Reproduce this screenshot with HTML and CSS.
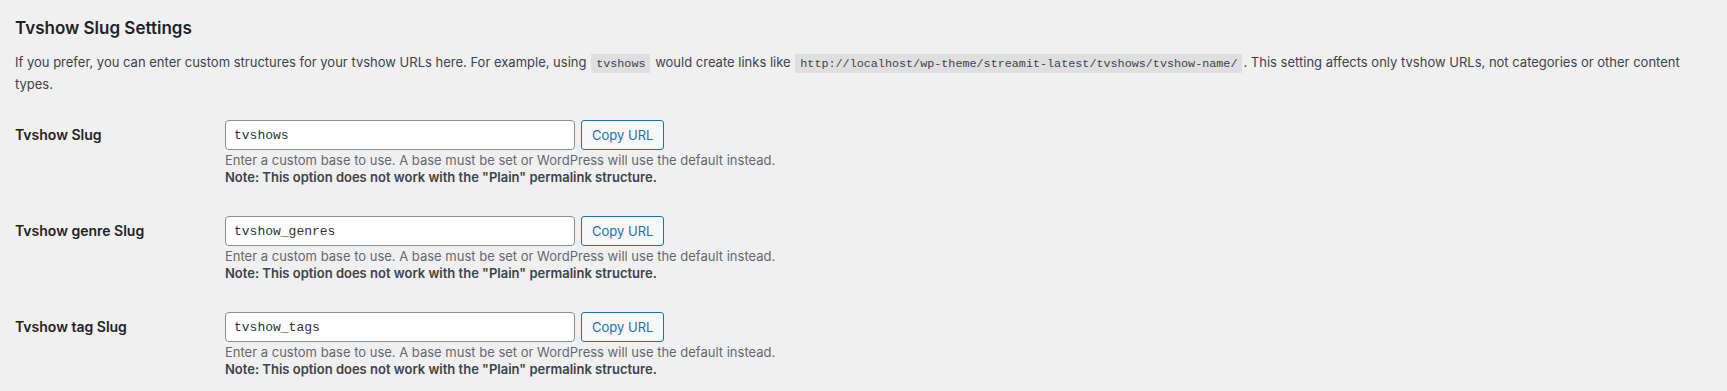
FILE: index.html
```html
<html>
  <head>
    <title>Tvshow Slug Settings</title>
    <meta charset="utf-8" />
    <link rel="stylesheet" href="styles.css">
  </head>
  <body>
    <div class="wrap">
      <h2 class="title">Tvshow Slug Settings</h2>
      <p class="intro">If you prefer, you can enter custom structures for your tvshow URLs here. For example, using <code>tvshows</code> would create links like <code>http://localhost/wp-theme/streamit-latest/tvshows/tvshow-name/</code>. This setting affects only tvshow URLs, not categories or other content types.</p>

      <table class="form-table">
        <tr>
          <th>Tvshow Slug</th>
          <td>
            <div class="field">
              <input type="text" class="regular-text" value="tvshows" />
              <button type="button" class="button">Copy URL</button>
            </div>
            <p class="description">Enter a custom base to use. A base must be set or WordPress will use the default instead.<br><strong>Note: This option does not work with the "Plain" permalink structure.</strong></p>
          </td>
        </tr>
        <tr>
          <th>Tvshow genre Slug</th>
          <td>
            <div class="field">
              <input type="text" class="regular-text" value="tvshow_genres" />
              <button type="button" class="button">Copy URL</button>
            </div>
            <p class="description">Enter a custom base to use. A base must be set or WordPress will use the default instead.<br><strong>Note: This option does not work with the "Plain" permalink structure.</strong></p>
          </td>
        </tr>
        <tr>
          <th>Tvshow tag Slug</th>
          <td>
            <div class="field">
              <input type="text" class="regular-text" value="tvshow_tags" />
              <button type="button" class="button">Copy URL</button>
            </div>
            <p class="description">Enter a custom base to use. A base must be set or WordPress will use the default instead.<br><strong>Note: This option does not work with the "Plain" permalink structure.</strong></p>
          </td>
        </tr>
      </table>
    </div>
  </body>
</html>
```

FILE: styles.css
```css
body{
    margin: 0;
    padding: 0;
    background-color: #f0f0f1;
    color: #3c434a;
    font-family: Inter, "Liberation Sans", sans-serif;
    font-size: 13px;
    line-height: 1.5;
}

.wrap{
    padding: 17px 20px 0 15px;
}

.title{
    margin: 0 0 14px 0;
    font-size: 17px;
    font-weight: 600;
    line-height: 22px;
    color: #1d2327;
}

.intro{
    margin: 0 0 10px 0;
    line-height: 19.5px;
}

code{
    font-family: "Liberation Mono", monospace;
    font-size: 11.75px;
    background: rgba(0,0,0,0.07);
    padding: 3px 5px 2px;
    margin: 0 1px;
    color: #3c434a;
}

.form-table{
    border-collapse: collapse;
    width: 100%;
    font-size: 13px;
}

.form-table th{
    width: 200px;
    padding: 21px 10px 0 0;
    vertical-align: top;
    text-align: left;
    font-size: 14px;
    font-weight: 600;
    color: #1d2327;
    line-height: 19.5px;
}

.form-table td{
    padding: 16px 0 14px 0;
    vertical-align: top;
}

.field{
    display: flex;
    gap: 6px;
}

.regular-text{
    width: 350px;
    height: 30px;
    box-sizing: border-box;
    padding: 0 8px;
    font-family: "Liberation Mono", monospace;
    font-size: 13px;
    color: #2c3338;
    background: #fff;
    border: 1px solid #8c8f94;
    border-radius: 4px;
    outline: none;
}

.button{
    height: 30px;
    padding: 0 10px;
    font-family: Inter, "Liberation Sans", sans-serif;
    font-size: 13px;
    color: #2271b1;
    background: #f6f7f7;
    border: 1px solid #2271b1;
    border-radius: 3px;
}

.description{
    margin: 2px 0 0 0;
    line-height: 17px;
    color: #646970;
}

.description strong{
    font-weight: 600;
    color: #3c434a;
}
```
